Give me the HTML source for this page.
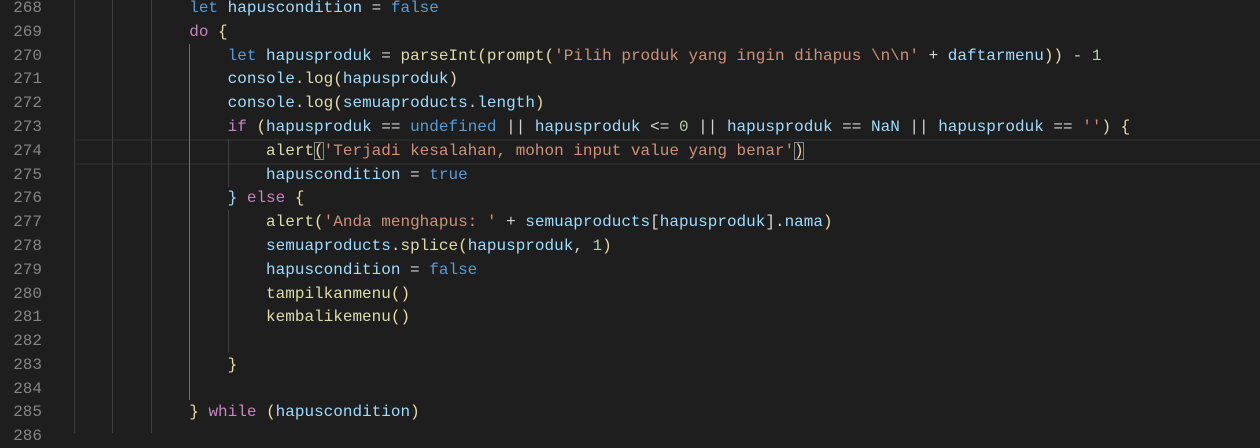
<!DOCTYPE html><html><head><style>
body{margin:0;width:1260px;height:433px;background:#1e1e1e;overflow:hidden;position:relative;font-family:"Liberation Mono",monospace;font-size:16px}
.l{position:absolute;left:0;height:24px;line-height:24px;white-space:pre;width:1260px}
.n{position:absolute;right:1218px;color:#858585;text-align:right}
.c{position:absolute;left:74px;color:#d4d4d4}
.g{position:absolute;width:1px;background:#404040}
.k{color:#569cd6}.p{color:#c586c0}.v{color:#9cdcfe}.f{color:#dcdcaa}.s{color:#ce9178}.m{color:#b5cea8}.y{color:#e8dca0}
.b{outline:1px solid #888;outline-offset:-1px}
</style></head><body>
<div style="position:absolute;left:76px;top:139px;width:1184px;height:22px;border-top:2px solid #282828;border-bottom:2px solid #282828"></div>
<div class="g" style="left:74px;top:0;height:433px"></div>
<div class="g" style="left:112px;top:0;height:433px"></div>
<div class="g" style="left:151px;top:0;height:433px"></div>
<div class="g" style="left:189px;top:44px;height:356px;background:#707070"></div>
<div class="g" style="left:228px;top:139px;height:48px"></div>
<div class="g" style="left:228px;top:210px;height:143px"></div>
<div class="l" style="top:-4px"><span class="n">268</span><span class="c">            <span class="k">let</span> <span class="v">hapuscondition</span> = <span class="k">false</span></span></div>
<div class="l" style="top:20px"><span class="n">269</span><span class="c">            <span class="p">do</span> <span class="y">{</span></span></div>
<div class="l" style="top:44px"><span class="n">270</span><span class="c">                <span class="k">let</span> <span class="v">hapusproduk</span> = <span class="f">parseInt</span><span class="y">(</span><span class="f">prompt</span><span class="y">(</span><span class="s">'Pilih produk yang ingin dihapus \n\n'</span> + <span class="v">daftarmenu</span><span class="y">))</span> - <span class="m">1</span></span></div>
<div class="l" style="top:67px"><span class="n">271</span><span class="c">                <span class="v">console</span>.<span class="f">log</span><span class="y">(</span><span class="v">hapusproduk</span><span class="y">)</span></span></div>
<div class="l" style="top:91px"><span class="n">272</span><span class="c">                <span class="v">console</span>.<span class="f">log</span><span class="y">(</span><span class="v">semuaproducts</span>.<span class="v">length</span><span class="y">)</span></span></div>
<div class="l" style="top:115px"><span class="n">273</span><span class="c">                <span class="p">if</span> <span class="y">(</span><span class="v">hapusproduk</span> == <span class="k">undefined</span> || <span class="v">hapusproduk</span> &lt;= <span class="m">0</span> || <span class="v">hapusproduk</span> == <span class="v">NaN</span> || <span class="v">hapusproduk</span> == <span class="s">''</span><span class="y">)</span> <span class="y">{</span></span></div>
<div class="l" style="top:139px"><span class="n">274</span><span class="c">                    <span class="f">alert</span><span class="b y">(</span><span class="s">'Terjadi kesalahan, mohon input value yang benar'</span><span class="b y">)</span></span></div>
<div class="l" style="top:163px"><span class="n">275</span><span class="c">                    <span class="v">hapuscondition</span> = <span class="k">true</span></span></div>
<div class="l" style="top:186px"><span class="n">276</span><span class="c">                <span class="v">}</span> <span class="p">else</span> <span class="y">{</span></span></div>
<div class="l" style="top:210px"><span class="n">277</span><span class="c">                    <span class="f">alert</span><span class="y">(</span><span class="s">'Anda menghapus: '</span> + <span class="v">semuaproducts</span>[<span class="v">hapusproduk</span>].<span class="v">nama</span><span class="y">)</span></span></div>
<div class="l" style="top:234px"><span class="n">278</span><span class="c">                    <span class="v">semuaproducts</span>.<span class="f">splice</span><span class="y">(</span><span class="v">hapusproduk</span>, <span class="m">1</span><span class="y">)</span></span></div>
<div class="l" style="top:258px"><span class="n">279</span><span class="c">                    <span class="v">hapuscondition</span> = <span class="k">false</span></span></div>
<div class="l" style="top:282px"><span class="n">280</span><span class="c">                    <span class="f">tampilkanmenu</span><span class="y">()</span></span></div>
<div class="l" style="top:305px"><span class="n">281</span><span class="c">                    <span class="f">kembalikemenu</span><span class="y">()</span></span></div>
<div class="l" style="top:329px"><span class="n">282</span><span class="c"></span></div>
<div class="l" style="top:353px"><span class="n">283</span><span class="c">                <span class="y">}</span></span></div>
<div class="l" style="top:377px"><span class="n">284</span><span class="c"></span></div>
<div class="l" style="top:400px"><span class="n">285</span><span class="c">            <span class="y">}</span> <span class="p">while</span> <span class="y">(</span><span class="v">hapuscondition</span><span class="y">)</span></span></div>
<div class="l" style="top:424px"><span class="n">286</span></div>
</body></html>
